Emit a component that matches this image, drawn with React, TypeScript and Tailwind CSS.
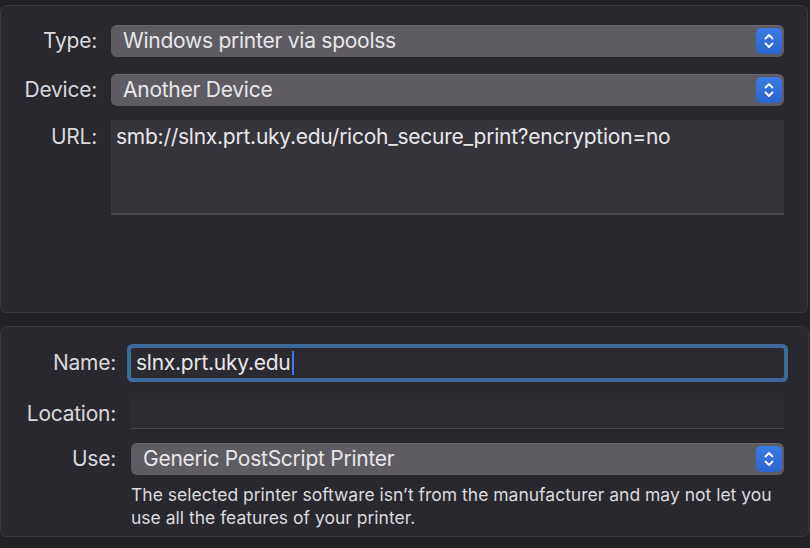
import React from "react";

const font = { fontFamily: "Inter, 'Noto Sans', sans-serif" };

function Stepper() {
  return (
    <div className="flex h-[26px] w-[26px] items-center justify-center rounded-[5px] bg-gradient-to-b from-[#3a7be6] to-[#2a64cf]">
      <svg width="12" height="20" viewBox="0 0 12 20" fill="none">
        <path d="M2.5 7.5 L6 4 L9.5 7.5" stroke="white" strokeWidth="1.8" strokeLinecap="round" strokeLinejoin="round" />
        <path d="M2.5 12.5 L6 16 L9.5 12.5" stroke="white" strokeWidth="1.8" strokeLinecap="round" strokeLinejoin="round" />
      </svg>
    </div>
  );
}

function Select({ value }: { value: string }) {
  return (
    <div className="flex h-[32px] items-center justify-between rounded-[6px] bg-[#5e5c62] pl-[12px] pr-[2px] shadow-[inset_0_1px_0_rgba(255,255,255,0.08)]">
      <span className="text-[21px] leading-[28px] tracking-[-0.25px] text-[#e8e7ea]">{value}</span>
      <Stepper />
    </div>
  );
}

function Label({ children }: { children: React.ReactNode }) {
  return <div className="text-right text-[21px] leading-[28px] tracking-[-0.25px] text-[#d9d8dc]">{children}</div>;
}

export default function App() {
  return (
    <div className="flex h-[548px] w-[810px] flex-col gap-[13px] bg-[#222127] pt-[5px]" style={font}>
      <div className="h-[308px] w-[808px] rounded-[7px] border border-[#3a393f] bg-[#29282e] pr-[23px] pt-[19px]">
        <div className="grid grid-cols-[96px_1fr] items-center gap-x-[14px]">
          <Label>Type:</Label>
          <Select value="Windows printer via spoolss" />
          <div className="col-span-2 h-[17px]" />
          <Label>Device:</Label>
          <Select value="Another Device" />
          <div className="col-span-2 h-[14px]" />
          <div className="self-start pt-[3px]">
            <Label>URL:</Label>
          </div>
          <div className="h-[95px] border-b-2 border-[#4a494f] bg-[#35343a] px-[5px] pt-[3px] text-[21px] leading-[28px] tracking-[-0.25px] text-[#e8e7ea]">
            smb://slnx.prt.uky.edu/ricoh_secure_print?encryption=no
          </div>
        </div>
      </div>
      <div className="h-[211px] w-[809px] rounded-[7px] border border-[#3a393f] bg-[#29282e] pr-[24px] pt-[21px]">
        <div className="grid grid-cols-[115px_1fr] items-center gap-x-[15px]">
          <Label>Name:</Label>
          <div className="flex h-[30px] items-center rounded-[2px] bg-[#2b2a30] px-[5px] ring-4 ring-[#3d6a9c]">
            <span className="text-[21px] leading-[28px] tracking-[-0.25px] text-[#e8e7ea]">slnx.prt.uky.edu</span>
            <span className="ml-[1px] h-[24px] w-[2px] bg-[#3b7ee8]" />
          </div>
          <div className="col-span-2 h-[21px]" />
          <Label>Location:</Label>
          <div className="h-[30px] border-b border-[#48474d] bg-[#2d2c32]" />
          <div className="col-span-2 h-[14px]" />
          <Label>Use:</Label>
          <Select value="Generic PostScript Printer" />
          <div />
          <p className="pt-[8px] text-[17.5px] leading-[23px] text-[#dcdbdf]">
            The selected printer software isn’t from the manufacturer and may not let you use all the features of your printer.
          </p>
        </div>
      </div>
    </div>
  );
}
